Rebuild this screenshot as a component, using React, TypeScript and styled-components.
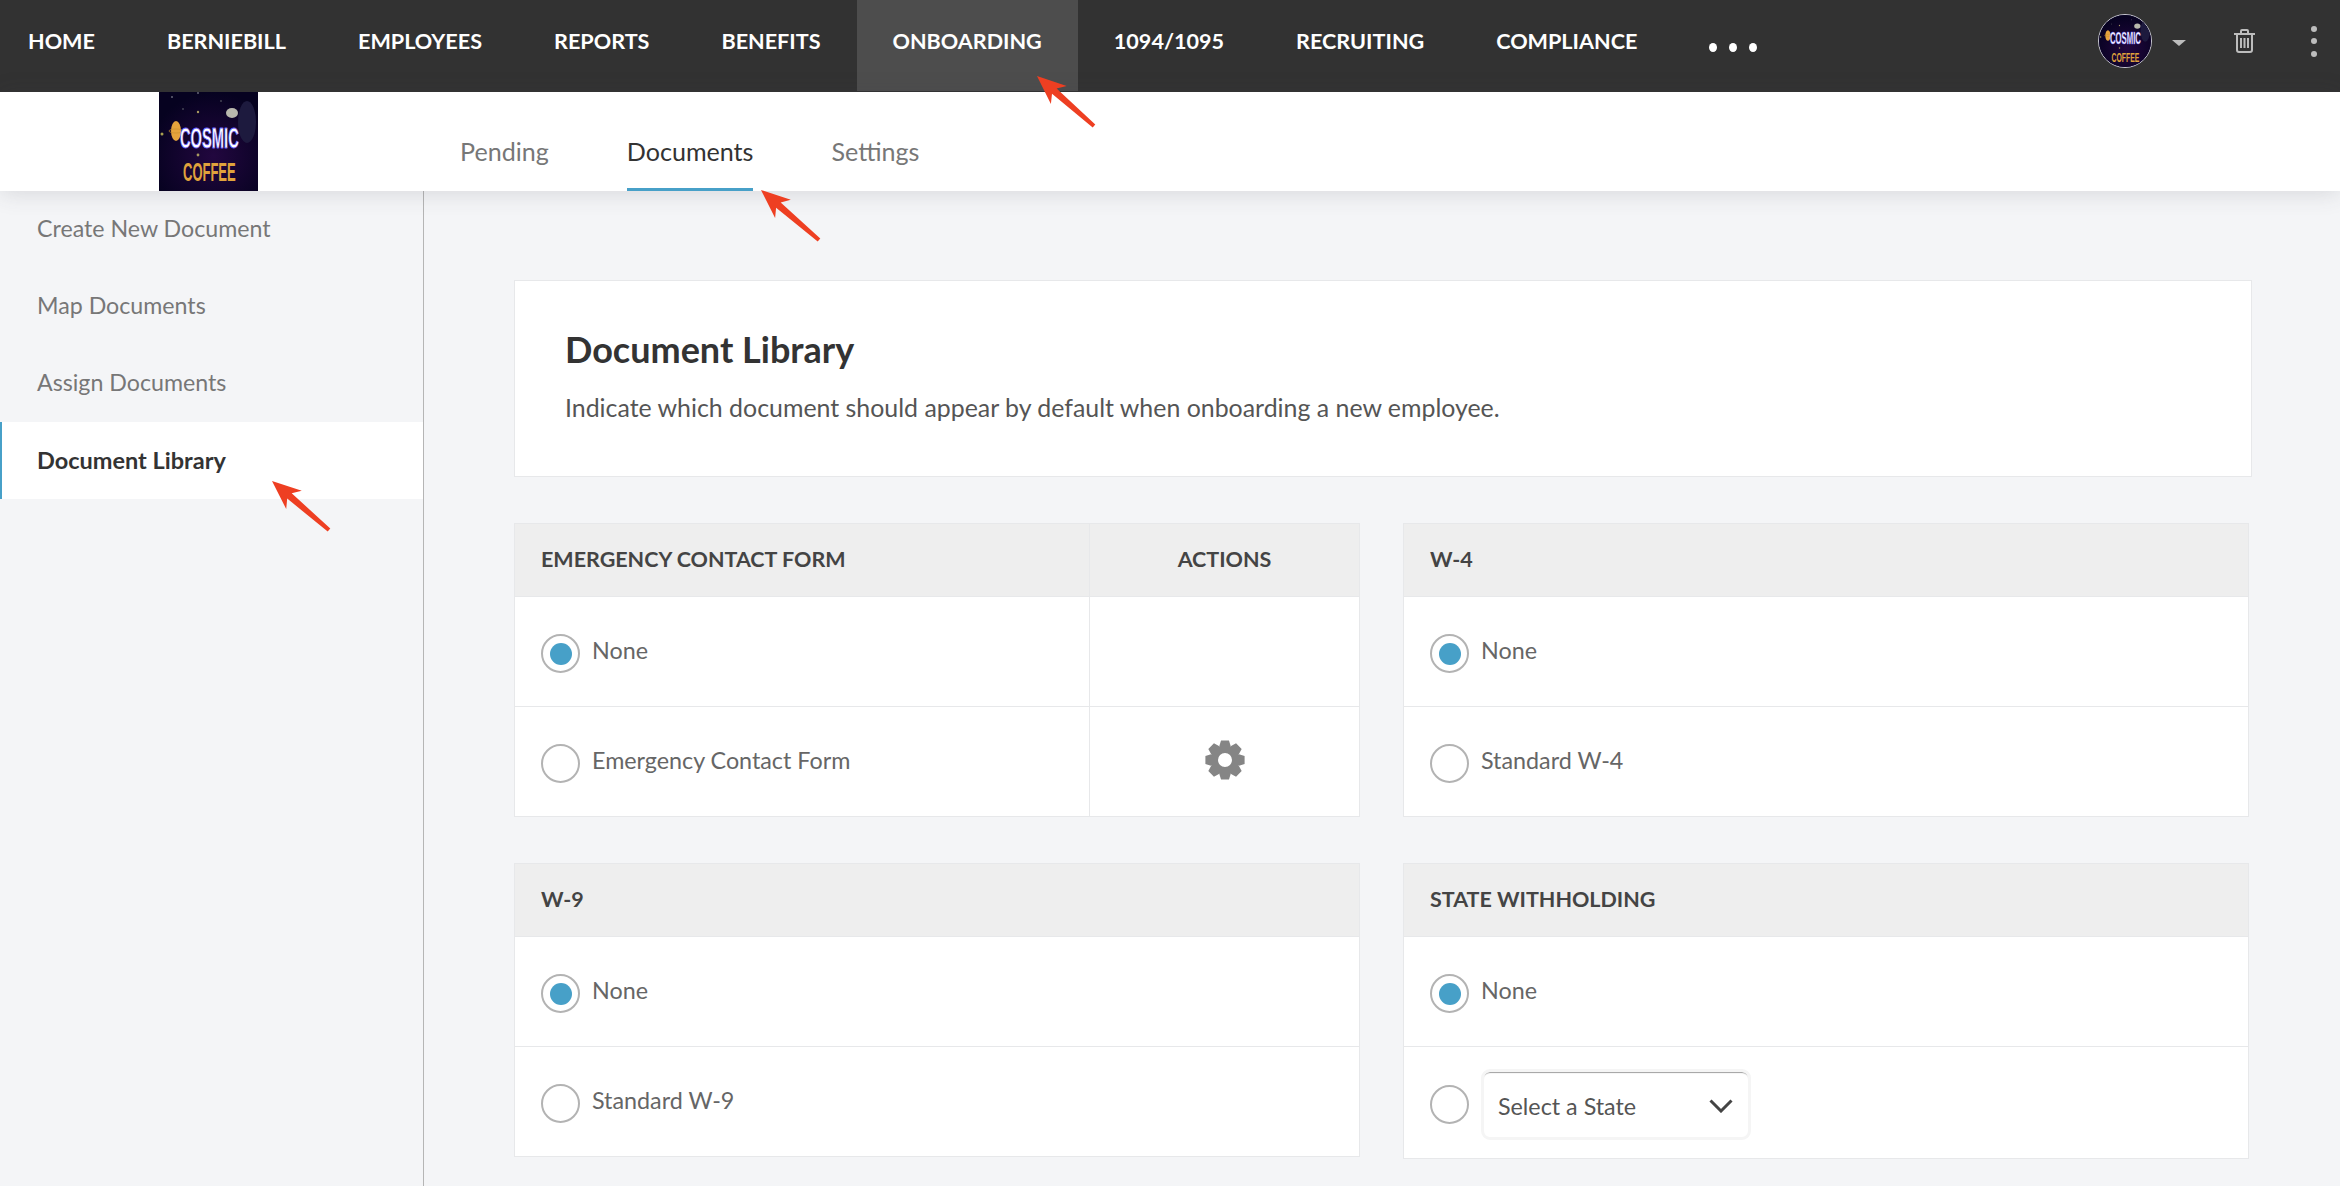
import React, { FunctionComponent } from 'react';
import styled, { createGlobalStyle } from 'styled-components';

const accent = '#47a0c8';
const lineColor = '#e7e8ea';
const arrowRed = '#ee3f22';

const GlobalStyle = createGlobalStyle`
  html, body {
    margin: 0;
    padding: 0;
    background: #f4f5f7;
    font-family: Lato, "Open Sans", sans-serif;
  }
  * {
    box-sizing: border-box;
  }
`;

const Page = styled.div`
  position: relative;
  width: 2340px;
  height: 1186px;
  overflow: hidden;
  display: flex;
  flex-direction: column;
`;

const TopBar = styled.header`
  height: 92px;
  flex: none;
  background: #323232;
  display: flex;
  align-items: stretch;
  padding-left: 28px;
`;

const NavItem = styled.a<{ $active?: boolean }>`
  height: 91px;
  padding: 0 36px 9px;
  display: flex;
  align-items: center;
  white-space: nowrap;
  color: #fff;
  font-size: 21.600px;
  font-weight: 700;
  background: ${(p) => (p.$active ? '#4d4d4d' : 'transparent')};
`;

const HomeItem = styled(NavItem)`
  padding-left: 0;
`;

const MoreDots = styled.div`
  display: flex;
  gap: 12px;
  align-items: center;
  padding: 2px 0 0 36px;
`;

const WhiteDot = styled.span`
  width: 8px;
  height: 9px;
  border-radius: 50%;
  background: #fff;
`;

const BarRight = styled.div`
  margin-left: auto;
  display: flex;
  align-items: center;
  padding: 0 23px 10px 0;
`;

const Avatar = styled.div`
  width: 54px;
  height: 54px;
  border-radius: 50%;
  overflow: hidden;
  border: 1px solid #c9c9d2;
  background: #0a0330;
`;

const Caret = styled.span`
  margin: 4px 0 0 20px;
  width: 0;
  height: 0;
  border-left: 7px solid transparent;
  border-right: 7px solid transparent;
  border-top: 6px solid #bdbdbd;
`;

const TrashIcon = styled.svg`
  margin-left: 48px;
  display: block;
`;

const Kebab = styled.div`
  margin-left: 56px;
  display: flex;
  flex-direction: column;
  gap: 6.5px;
`;

const GrayDot = styled.span`
  width: 6px;
  height: 6px;
  border-radius: 50%;
  background: #bdbdbd;
`;

const SubBar = styled.div`
  position: relative;
  z-index: 2;
  height: 99px;
  flex: none;
  background: #fff;
  display: flex;
  padding-left: 159px;
  box-shadow: 0 2px 22px rgba(60, 65, 75, 0.16);
`;

const LogoBox = styled.div`
  width: 99px;
  height: 99px;
  flex: none;
`;

const LogoArt = styled.svg`
  display: block;
  width: 100%;
  height: 100%;
`;

const Tabs = styled.nav`
  display: flex;
  gap: 78px;
  margin-left: 202px;
`;

const Tab = styled.a<{ $active?: boolean }>`
  display: flex;
  align-items: center;
  padding-top: 22px;
  height: 99px;
  font-size: 25.100px;
  color: ${(p) => (p.$active ? '#333' : '#777')};
  border-bottom: 3px solid ${(p) => (p.$active ? accent : 'transparent')};
`;

const Body = styled.div`
  flex: 1;
  display: flex;
  min-height: 0;
`;

const Sidebar = styled.aside`
  width: 424px;
  flex: none;
  border-right: 1px solid #b5b5b5;
`;

const SideItem = styled.a<{ $active?: boolean }>`
  height: 77px;
  display: flex;
  align-items: center;
  padding-left: ${(p) => (p.$active ? '35px' : '37px')};
  padding-bottom: ${(p) => (p.$active ? '1px' : '3px')};
  font-size: ${(p) => (p.$active ? '23.500px' : '23.200px')};
  font-weight: ${(p) => (p.$active ? 700 : 400)};
  color: ${(p) => (p.$active ? '#333' : '#777')};
  background: ${(p) => (p.$active ? '#fff' : 'transparent')};
  border-left: ${(p) => (p.$active ? `2px solid ${accent}` : 'none')};
`;

const Content = styled.main`
  flex: 1;
  padding: 89px 88px 0 90px;
`;

const IntroCard = styled.section`
  height: 197px;
  background: #fff;
  border: 1px solid ${lineColor};
  padding: 48px 33px 0 50px;
  margin-bottom: 46px;
`;

const Title = styled.h1`
  margin: 0 0 21px;
  font-size: 36px;
  line-height: 40px;
  font-weight: 700;
  color: #333;
`;

const Description = styled.p`
  margin: 0;
  font-size: 24.900px;
  line-height: 34px;
  color: #555;
`;

const PanelGrid = styled.div`
  display: grid;
  grid-template-columns: 846px 846px;
  column-gap: 43px;
  row-gap: 46px;
  align-items: start;
`;

const Panel = styled.section`
  background: #fff;
  border: 1px solid ${lineColor};
`;

const PanelRow = styled.div<{ $head?: boolean; $tall?: boolean }>`
  display: flex;
  min-height: ${(p) => (p.$head ? '72px' : p.$tall ? '112px' : '110px')};
  background: ${(p) => (p.$head ? '#eeeeee' : '#fff')};
  & + & {
    border-top: 1px solid ${lineColor};
  }
`;

const MainCell = styled.div`
  flex: 1;
  display: flex;
  align-items: center;
  padding-left: 26px;
`;

const ActionCell = styled.div`
  width: 270px;
  flex: none;
  display: flex;
  align-items: center;
  justify-content: center;
  border-left: 1px solid ${lineColor};
`;

const HeadText = styled.span`
  padding-bottom: 2px;
  font-size: 21.500px;
  font-weight: 700;
  color: #444;
`;

const Radio = styled.span<{ $checked?: boolean }>`
  width: 39px;
  height: 39px;
  flex: none;
  margin-top: 4px;
  border: 2px solid #b3b3b3;
  border-radius: 50%;
  background: #fff;
  display: flex;
  align-items: center;
  justify-content: center;
  &::after {
    content: '';
    width: 22px;
    height: 22px;
    border-radius: 50%;
    background: ${(p) => (p.$checked ? accent : 'transparent')};
  }
`;

const RowLabel = styled.span`
  margin-left: 12px;
  padding-bottom: 3px;
  font-size: 23.300px;
  color: #666;
`;

const StateSelect = styled.div`
  margin: 3px 0 0 12px;
  width: 270px;
  height: 71px;
  border: 3px solid #f5f5f5;
  border-radius: 9px;
  box-shadow: inset 0 2px 1px -1px #a0a0a0;
  display: flex;
  align-items: center;
  justify-content: space-between;
  padding: 4px 15px 0 14px;
  font-size: 23.300px;
  color: #555;
`;

const GearIcon = styled.svg`
  display: block;
  margin-bottom: 3px;
`;

const ArrowLayer = styled.svg`
  position: absolute;
  left: 0;
  top: 0;
  z-index: 5;
  pointer-events: none;
`;

const Logo: FunctionComponent = () => (
  <LogoArt viewBox="0 0 99 99">
    <defs>
      <radialGradient id="logoSky" cx="55%" cy="65%" r="65%">
        <stop offset="0" stopColor="#22073f" />
        <stop offset="1" stopColor="#060220" />
      </radialGradient>
    </defs>
    <rect width="99" height="99" fill="url(#logoSky)" />
    <ellipse cx="88" cy="30" rx="9" ry="21" fill="#1d1a3e" />
    <ellipse cx="73" cy="21" rx="6" ry="5" fill="#b9b9ad" />
    <ellipse cx="17" cy="39" rx="5" ry="10" fill="#e5a33c" />
    <ellipse cx="17" cy="39" rx="7" ry="2" fill="none" stroke="#c98f2e" strokeWidth="0.7" />
    <circle cx="3" cy="42" r="1.5" fill="#a8a050" />
    <circle cx="39" cy="20" r="1.2" fill="#a89a60" />
    <circle cx="13" cy="5" r="1" fill="#667" />
    <circle cx="39" cy="1" r="1" fill="#667" />
    <circle cx="62" cy="9" r="1" fill="#445" />
    <circle cx="24" cy="17" r="1" fill="#445" />
    <circle cx="39" cy="63" r="1.4" fill="#a89a60" />
    <text
      transform="translate(21 56) scale(0.49 1)"
      fontFamily="Liberation Sans, sans-serif"
      fontWeight="700"
      fontSize="30"
      fill="#fff"
      stroke="#6a5cff"
      strokeWidth="0.8"
    >
      COSMIC
    </text>
    <text
      transform="translate(24 89) scale(0.5 1)"
      fontFamily="Liberation Sans, sans-serif"
      fontWeight="700"
      fontSize="26"
      fill="#e0a33c"
    >
      COFFEE
    </text>
  </LogoArt>
);

const gearPath = () => {
  const cx = 20;
  const cy = 20;
  const pts: string[] = [];
  for (let i = 0; i < 8; i++) {
    const a = (i * Math.PI) / 4 - Math.PI / 2;
    const spots: Array<[number, number]> = [
      [14.5, -0.42],
      [20, -0.2],
      [20, 0.2],
      [14.5, 0.42],
    ];
    spots.forEach(([r, d]) => {
      pts.push(`${(cx + r * Math.cos(a + d)).toFixed(2)} ${(cy + r * Math.sin(a + d)).toFixed(2)}`);
    });
  }
  return `M${pts.join('L')}Z M27 20a7 7 0 1 0 -14 0a7 7 0 1 0 14 0Z`;
};

const Gear: FunctionComponent = () => (
  <GearIcon width="40" height="40" viewBox="0 0 40 40">
    <path d={gearPath()} fill="#858585" fillRule="evenodd" />
  </GearIcon>
);

const arrowPoints = (tip: [number, number], tail: [number, number]) => {
  const dx = tail[0] - tip[0];
  const dy = tail[1] - tip[1];
  const len = Math.sqrt(dx * dx + dy * dy);
  const ux = dx / len;
  const uy = dy / len;
  const at = (along: number, side: number) =>
    `${(tip[0] + ux * along - uy * side).toFixed(1)},${(tip[1] + uy * along + ux * side).toFixed(1)}`;
  return [
    at(0, 0),
    at(29, 12),
    at(23, 3.5),
    at(len, 2),
    at(len, -2),
    at(23, -3.5),
    at(29, -12),
  ].join(' ');
};

interface PanelOption {
  label: string;
  checked?: boolean;
  action?: boolean;
}

interface DocumentPanelProps {
  title: string;
  options: Array<PanelOption>;
  withActions?: boolean;
  children?: React.ReactNode;
}

const DocumentPanel: FunctionComponent<DocumentPanelProps> = ({ title, options, withActions, children }) => (
  <Panel>
    <PanelRow $head>
      <MainCell>
        <HeadText>{title}</HeadText>
      </MainCell>
      {withActions && (
        <ActionCell>
          <HeadText>ACTIONS</HeadText>
        </ActionCell>
      )}
    </PanelRow>
    {options.map((option) => (
      <PanelRow key={option.label}>
        <MainCell>
          <Radio $checked={option.checked} />
          <RowLabel>{option.label}</RowLabel>
        </MainCell>
        {withActions && <ActionCell>{option.action && <Gear />}</ActionCell>}
      </PanelRow>
    ))}
    {children}
  </Panel>
);

const navItems = ['BERNIEBILL', 'EMPLOYEES', 'REPORTS', 'BENEFITS', 'ONBOARDING', '1094/1095', 'RECRUITING', 'COMPLIANCE'];
const sideItems = ['Create New Document', 'Map Documents', 'Assign Documents', 'Document Library'];

const App: FunctionComponent = () => {
  return (
    <Page>
      <GlobalStyle />
      <TopBar>
        <HomeItem>HOME</HomeItem>
        {navItems.map((item) => (
          <NavItem key={item} $active={item === 'ONBOARDING'}>
            {item}
          </NavItem>
        ))}
        <MoreDots>
          <WhiteDot />
          <WhiteDot />
          <WhiteDot />
        </MoreDots>
        <BarRight>
          <Avatar>
            <Logo />
          </Avatar>
          <Caret />
          <TrashIcon width="21" height="24" viewBox="0 0 21 24" fill="none" stroke="#bdbdbd" strokeWidth="2">
            <path d="M0 5h21M7 5V2a1 1 0 0 1 1-1h5a1 1 0 0 1 1 1v3M3 5v16a2 2 0 0 0 2 2h11a2 2 0 0 0 2-2V5M7 9v10M10.500 9v10M14 9v10" />
          </TrashIcon>
          <Kebab>
            <GrayDot />
            <GrayDot />
            <GrayDot />
          </Kebab>
        </BarRight>
      </TopBar>
      <SubBar>
        <LogoBox>
          <Logo />
        </LogoBox>
        <Tabs>
          <Tab>Pending</Tab>
          <Tab $active>Documents</Tab>
          <Tab>Settings</Tab>
        </Tabs>
      </SubBar>
      <Body>
        <Sidebar>
          {sideItems.map((item) => (
            <SideItem key={item} $active={item === 'Document Library'}>
              {item}
            </SideItem>
          ))}
        </Sidebar>
        <Content>
          <IntroCard>
            <Title>Document Library</Title>
            <Description>Indicate which document should appear by default when onboarding a new employee.</Description>
          </IntroCard>
          <PanelGrid>
            <DocumentPanel
              title="EMERGENCY CONTACT FORM"
              withActions
              options={[{ label: 'None', checked: true }, { label: 'Emergency Contact Form', action: true }]}
            />
            <DocumentPanel title="W-4" options={[{ label: 'None', checked: true }, { label: 'Standard W-4' }]} />
            <DocumentPanel title="W-9" options={[{ label: 'None', checked: true }, { label: 'Standard W-9' }]} />
            <DocumentPanel title="STATE WITHHOLDING" options={[{ label: 'None', checked: true }]}>
              <PanelRow $tall>
                <MainCell>
                  <Radio />
                  <StateSelect>
                    Select a State
                    <svg width="24" height="14" viewBox="0 0 24 14" fill="none" stroke="#444" strokeWidth="3">
                      <path d="M1.500 1.500L12 12L22.500 1.500" />
                    </svg>
                  </StateSelect>
                </MainCell>
              </PanelRow>
            </DocumentPanel>
          </PanelGrid>
        </Content>
      </Body>
      <ArrowLayer width="2340" height="1186" fill={arrowRed}>
        <polygon points={arrowPoints([1037, 76], [1094, 126])} />
        <polygon points={arrowPoints([761, 190], [819, 240])} />
        <polygon points={arrowPoints([272, 481], [329, 530])} />
      </ArrowLayer>
    </Page>
  );
};

export default App;
